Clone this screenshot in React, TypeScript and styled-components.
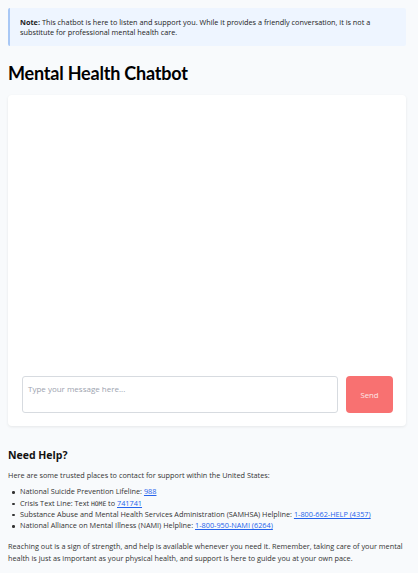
import React from "react";
import styled, { createGlobalStyle } from "styled-components";

const Global = createGlobalStyle`
  html, body { margin: 0; padding: 0; background: #f8fafc; }
  body { font-family: "Open Sans", "Noto Sans", sans-serif; color: #1f2937; }
  * { box-sizing: border-box; }
`;

const Page = styled.div`
  padding: 8px 12px 8px 8px;
  display: flex;
  flex-direction: column;
`;

const Note = styled.div`
  background: #eef5ff;
  border-left: 2px solid #a9c8f5;
  border-radius: 2px;
  padding: 9px 12px 9px 10px;
  font-size: 7.3px;
  line-height: 10px;
  color: #222;
`;

const Title = styled.h1`
  margin: 14px 0 0;
  font-family: "Lato", "Open Sans", sans-serif;
  font-size: 18px;
  letter-spacing: -0.2px;
  line-height: 26px;
  font-weight: 700;
  color: #000;
`;

const Card = styled.div`
  margin-top: 9px;
  height: 331px;
  background: #fff;
  border-radius: 4px;
  box-shadow: 0 1px 3px rgba(0, 0, 0, 0.08);
  display: flex;
  flex-direction: column;
  justify-content: flex-end;
  padding: 0 13px 13px 14px;
`;

const InputRow = styled.div`
  display: flex;
  gap: 8px;
  align-items: stretch;
`;

const Input = styled.textarea`
  flex: 1;
  height: 37px;
  border: 1px solid #d7dbe0;
  border-radius: 3px;
  padding: 6px 5px;
  font-family: inherit;
  font-size: 8px;
  resize: none;
  outline: none;
  &::placeholder { color: #9ca3af; }
`;

const SendButton = styled.button`
  width: 47px;
  height: 37px;
  border: none;
  border-radius: 4px;
  background: #f87171;
  color: #fde8e8;
  font-family: inherit;
  font-size: 7.8px;
`;

const Help = styled.section`
  margin-top: 22px;
  font-size: 7.3px;
  line-height: 11.3px;
  color: #333;
`;

const HelpTitle = styled.h2`
  margin: 0 0 8px;
  font-size: 10.5px;
  line-height: 14px;
  font-weight: 700;
  color: #111;
`;

const P = styled.p`
  margin: 0;
`;

const List = styled.ul`
  margin: 5px 0 10px;
  padding-left: 12px;
  list-style: none;
`;

const Item = styled.li`
  position: relative;
  &::before {
    content: "";
    position: absolute;
    left: -8px;
    top: 5px;
    width: 2.5px;
    height: 2.5px;
    border-radius: 50%;
    background: #333;
  }
`;

const Link = styled.a`
  color: #2563eb;
  text-decoration: underline;
`;

const Mono = styled.code`
  font-family: "DejaVu Sans Mono", monospace;
  font-size: 6.3px;
`;

export default function App() {
  return (
    <>
      <Global />
      <Page>
        <Note>
          <strong>Note:</strong> This chatbot is here to listen and support you. While it provides a friendly
          conversation, it is not a substitute for professional mental health care.
        </Note>
        <Title>Mental Health Chatbot</Title>
        <Card>
          <InputRow>
            <Input placeholder="Type your message here..." />
            <SendButton>Send</SendButton>
          </InputRow>
        </Card>
        <Help>
          <HelpTitle>Need Help?</HelpTitle>
          <P>Here are some trusted places to contact for support within the United States:</P>
          <List>
            <Item>
              National Suicide Prevention Lifeline: <Link href="#">988</Link>
            </Item>
            <Item>
              Crisis Text Line: Text <Mono>HOME</Mono> to <Link href="#">741741</Link>
            </Item>
            <Item>
              Substance Abuse and Mental Health Services Administration (SAMHSA) Helpline:{" "}
              <Link href="#">1-800-662-HELP (4357)</Link>
            </Item>
            <Item>
              National Alliance on Mental Illness (NAMI) Helpline: <Link href="#">1-800-950-NAMI (6264)</Link>
            </Item>
          </List>
          <P>
            Reaching out is a sign of strength, and help is available whenever you need it. Remember, taking care of
            your mental health is just as important as your physical health, and support is here to guide you at your
            own pace.
          </P>
        </Help>
      </Page>
    </>
  );
}
